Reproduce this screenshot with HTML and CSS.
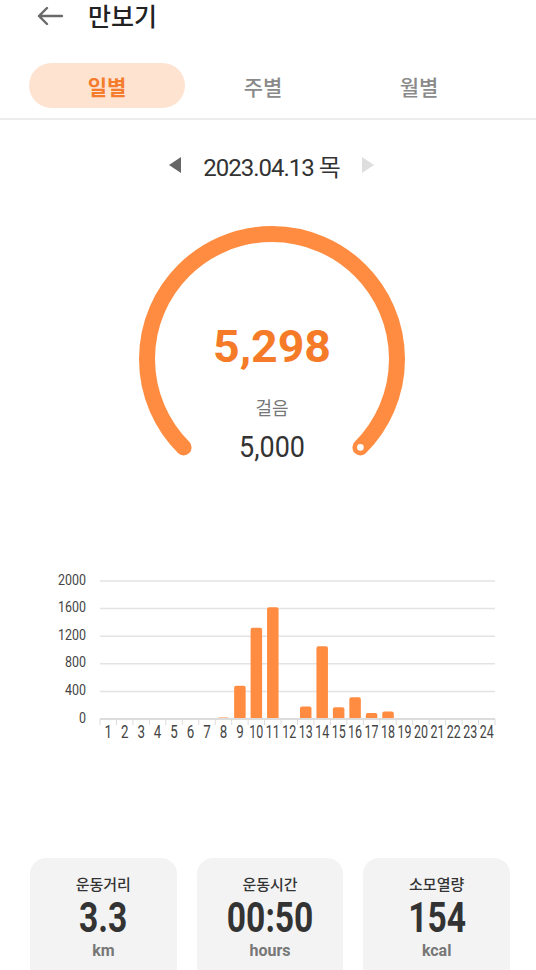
FILE: index.html
```html
<!DOCTYPE html>
<html lang="ko">
<head>
  <meta charset="UTF-8" />
  <title>만보기</title>
  <link rel="stylesheet" href="styles.css">
</head>
<body>
  <div class="app-header">
    <svg class="back-icon" width="26" height="18" viewBox="0 0 26 18">
      <path d="M25 9H2M10 1L2 9l8 8" fill="none" stroke="#6a6a6a" stroke-width="2.4" stroke-linecap="round" stroke-linejoin="round"/>
    </svg>
    <h1 class="app-title">만보기</h1>
  </div>

  <div class="tab-bar">
    <div class="tab active">일별</div>
    <div class="tab">주별</div>
    <div class="tab">월별</div>
  </div>

  <div class="date-row">
    <svg width="12" height="16" viewBox="0 0 12 16"><path d="M12 0v16L0 8z" fill="#666"/></svg>
    <span class="date-text">2023.04.13 <span class="kr">목</span></span>
    <svg width="12" height="16" viewBox="0 0 12 16"><path d="M0 0v16l12-8z" fill="#dedede"/></svg>
  </div>

  <div class="gauge">
    <svg width="280" height="250" viewBox="0 0 280 250">
      <path d="M51.6 228.4A125 125 0 1 1 228.4 228.4" fill="none" stroke="#ff8c40" stroke-width="16" stroke-linecap="round"/>
      <circle cx="228.4" cy="228.4" r="3.3" fill="#fff"/>
      <text class="gauge-steps" x="140" y="143" text-anchor="middle" textLength="118" lengthAdjust="spacingAndGlyphs">5,298</text>
      <text class="gauge-label" x="140" y="196" text-anchor="middle">걸음</text>
      <text class="gauge-goal" x="140" y="238" text-anchor="middle" textLength="66" lengthAdjust="spacingAndGlyphs">5,000</text>
    </svg>
  </div>

  <div class="chart">
    <svg id="hour-chart" width="460" height="180" viewBox="0 0 460 180"></svg>
  </div>

  <div class="stat-cards">
    <div class="stat-card">
      <div class="stat-label">운동거리</div>
      <div class="stat-value"><span>3.3</span></div>
      <div class="stat-unit">km</div>
    </div>
    <div class="stat-card">
      <div class="stat-label">운동시간</div>
      <div class="stat-value"><span>00:50</span></div>
      <div class="stat-unit">hours</div>
    </div>
    <div class="stat-card">
      <div class="stat-label">소모열량</div>
      <div class="stat-value"><span>154</span></div>
      <div class="stat-unit">kcal</div>
    </div>
  </div>

  <script>
    /* hourly steps chart */
    (function () {
      const steps = [0,0,0,0,0,0,0,20,482,1324,1620,0,180,1055,170,317,88,107,5,0,0,0,0,0];
      const chart = document.getElementById('hour-chart');
      const x0 = 60, x1 = 455, yTop = 16, yBase = 154;
      const slot = (x1 - x0) / 24;
      const scale = (yBase - yTop) / 2000;
      let out = '';

      // grid + y labels
      for (let v = 0; v <= 2000; v += 400) {
        const y = yBase - v * scale;
        if (v > 0) out += `<line x1="${x0}" x2="${x1}" y1="${y}" y2="${y}" class="grid"/>`;
        const len = String(v).length * 7;
        out += `<text x="46" y="${y + 3.5}" text-anchor="end" class="ylab" textLength="${len}" lengthAdjust="spacingAndGlyphs">${v}</text>`;
      }

      // bars
      steps.forEach((s, i) => {
        if (!s) return;
        const h = s * scale;
        const x = x0 + slot * i + (slot - 11.5) / 2;
        out += `<rect x="${x}" y="${yBase - h}" width="11.5" height="${h + 1}" rx="2" class="bar"/>`;
      });

      // axis, ticks, x labels
      out += `<line x1="${x0}" x2="${x1}" y1="${yBase}" y2="${yBase}" class="axis"/>`;
      for (let i = 0; i <= 24; i++) {
        const x = x0 + slot * i;
        out += `<line x1="${x}" x2="${x}" y1="${yBase}" y2="${yBase + 6}" class="tick"/>`;
        if (i < 24) {
          const n = i + 1;
          const w = n < 10 ? 7.5 : 14;
          out += `<text x="${x + slot / 2}" y="173" text-anchor="middle" class="xlab" textLength="${w}" lengthAdjust="spacingAndGlyphs">${n}</text>`;
        }
      }
      chart.innerHTML = out;
    })();
  </script>
</body>
</html>
```

FILE: styles.css
```css
body {
  font-family: Roboto, "Noto Sans CJK KR", sans-serif;
  background: #ffffff;
  margin: 0;
  width: 536px;
  color: #333;
}
.app-header {
  display: flex;
  align-items: center;
  height: 31px;
  padding-left: 37px;
  gap: 25px;
}
.back-icon {
  display: block;
}
.app-title {
  margin: 0;
  font-family: "Noto Sans CJK KR", sans-serif;
  font-size: 25px;
  font-weight: 500;
  color: #222;
  line-height: 31px;
}
.tab-bar {
  display: grid;
  grid-template-columns: repeat(3, 156px);
  margin-top: 32px;
  padding: 0 29px 10px;
  border-bottom: 2px solid #ececec;
}
.tab {
  height: 45px;
  display: flex;
  align-items: center;
  justify-content: center;
  font-family: "Noto Sans CJK KR", sans-serif;
  font-size: 21px;
  font-weight: 500;
  color: #8a8a8a;
  border-radius: 23px;
}
.tab.active {
  background: #fee3d1;
  color: #f47c2c;
  font-weight: 700;
}
.date-row {
  display: flex;
  align-items: center;
  justify-content: center;
  gap: 22px;
  height: 30px;
  margin-top: 30px;
  padding-left: 7px;
}
.date-text {
  font-size: 24px;
  letter-spacing: -1px;
  color: #333;
}
.kr {
  font-family: "Noto Sans CJK KR", sans-serif;
}
.gauge {
  display: flex;
  justify-content: center;
  margin-top: 39px;
  padding-left: 8px;
  height: 250px;
}
.gauge-steps {
  font-family: Roboto, sans-serif;
  font-size: 44px;
  font-weight: 700;
  fill: #f57b28;
}
.gauge-label {
  font-family: "Noto Sans CJK KR", sans-serif;
  font-size: 18px;
  fill: #777;
}
.gauge-goal {
  font-family: Roboto, sans-serif;
  font-size: 30px;
  fill: #333;
}
.chart {
  margin-top: 96px;
  padding-left: 40px;
  height: 180px;
}
.chart svg {
  display: block;
}
.grid {
  stroke: #e3e3e3;
  stroke-width: 1.5;
}
.axis {
  stroke: #dcdcdc;
  stroke-width: 2;
}
.tick {
  stroke: #dcdcdc;
  stroke-width: 1;
}
.bar {
  fill: #ff8c40;
}
.ylab {
  font-family: Roboto, sans-serif;
  font-size: 15px;
  fill: #444;
}
.xlab {
  font-family: Roboto, sans-serif;
  font-size: 18px;
  fill: #444;
}
.stat-cards {
  display: grid;
  grid-template-columns: repeat(3, 1fr);
  gap: 20px;
  margin-top: 113px;
  padding: 0 26px 0 30px;
}
.stat-card {
  background: #f3f3f3;
  border-radius: 16px;
  height: 130px;
  padding-top: 16px;
  text-align: center;
  box-sizing: border-box;
}
.stat-label {
  font-family: "Noto Sans CJK KR", sans-serif;
  font-size: 15px;
  font-weight: 500;
  line-height: 20px;
  color: #333;
}
.stat-value {
  font-size: 42px;
  font-weight: 700;
  line-height: 48px;
  color: #333;
}
.stat-value span {
  display: inline-block;
  transform: scaleX(0.8);
}
.stat-unit {
  font-size: 16px;
  font-weight: 700;
  line-height: 18px;
  color: #777;
}
```
